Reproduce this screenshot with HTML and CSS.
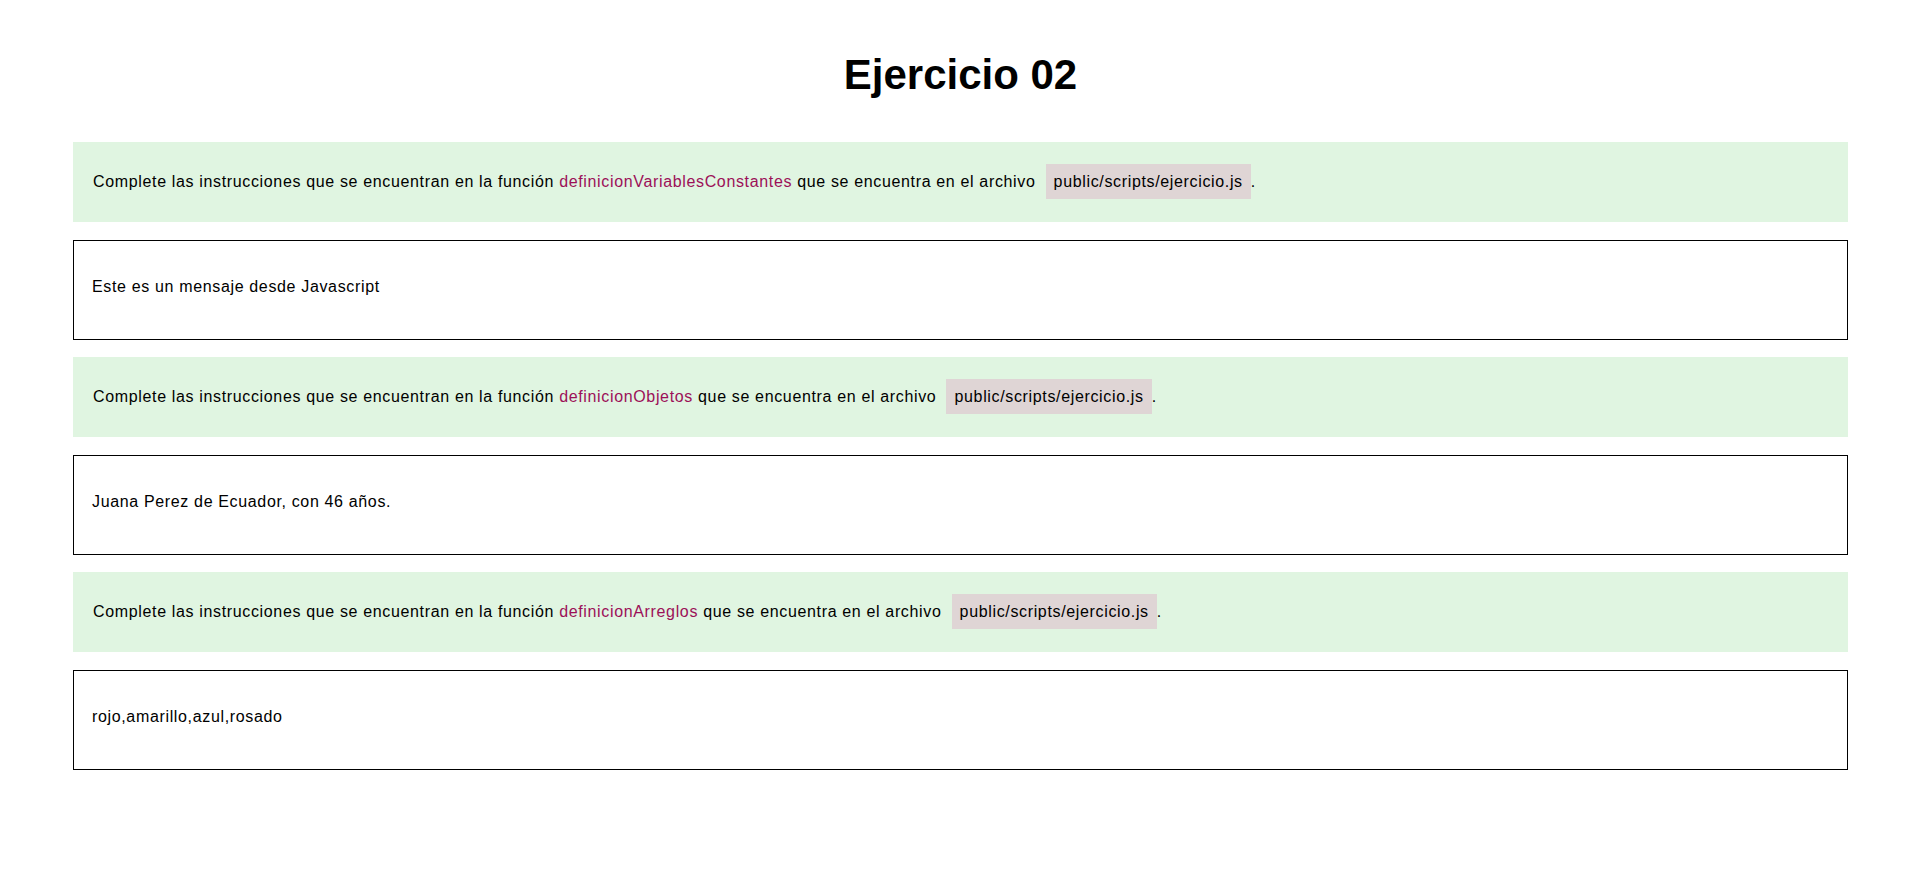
FILE: index.html
```html
<!DOCTYPE html>
<html lang="es">
<head>
<meta charset="utf-8">
<title>Ejercicio 02</title>
<link rel="stylesheet" href="styles.css">
</head>
<body>
<main class="page">
  <h1 class="title">Ejercicio 02</h1>
  <section class="blocks">
    <div class="note">Complete las instrucciones que se encuentran en la función <span class="fn">definicionVariablesConstantes</span> que se encuentra en el archivo <code class="path">public/scripts/ejercicio.js</code>.</div>
    <div class="output">Este es un mensaje desde Javascript</div>
    <div class="note">Complete las instrucciones que se encuentran en la función <span class="fn">definicionObjetos</span> que se encuentra en el archivo <code class="path">public/scripts/ejercicio.js</code>.</div>
    <div class="output">Juana Perez de Ecuador, con 46 años.</div>
    <div class="note">Complete las instrucciones que se encuentran en la función <span class="fn">definicionArreglos</span> que se encuentra en el archivo <code class="path">public/scripts/ejercicio.js</code>.</div>
    <div class="output">rojo,amarillo,azul,rosado</div>
  </section>
</main>
</body>
</html>
```

FILE: styles.css
```css
* { box-sizing: border-box; }

html, body {
  margin: 0;
  padding: 0;
  background: #ffffff;
  color: #000000;
  font-family: "Liberation Sans", Arial, sans-serif;
  font-size: 16px;
}

.page {
  padding: 0 72px 0 73px;
}

.title {
  margin: 0;
  padding-top: 51px;
  height: 142px;
  text-align: center;
  font-size: 42px;
  line-height: 48px;
  font-weight: bold;
}

.blocks {
  display: flex;
  flex-direction: column;
  gap: 17.5px;
  letter-spacing: 0.65px;
}

.note {
  background: #e0f5e1;
  padding: 31px 20px;
  line-height: 18px;
  height: 80px;
}

.fn {
  color: #9c1058;
}

.path {
  font-family: "Liberation Sans", Arial, sans-serif;
  font-size: 16px;
  background: #dfd5d5;
  padding: 9px 8px;
  margin-left: 5px;
}

.output {
  border: 1px solid #000000;
  height: 100px;
  padding: 37px 18px 0 18px;
  line-height: 18px;
}
```
